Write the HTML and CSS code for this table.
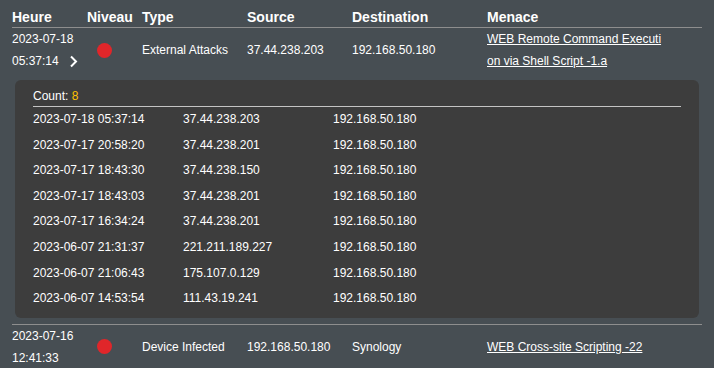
FILE: index.html
```html
<!DOCTYPE html>
<html lang="fr">
<head>
    <meta charset="UTF-8">
    <meta name="viewport" content="width=device-width, initial-scale=1.0">
    <title>Journal des menaces</title>
    <link rel="stylesheet" href="styles.css">
</head>
<body>
    <div class="log">
        <div class="log-row log-head">
            <div>Heure</div>
            <div>Niveau</div>
            <div>Type</div>
            <div>Source</div>
            <div>Destination</div>
            <div>Menace</div>
        </div>

        <div class="log-row entry">
            <div class="time">
                <div>2023-07-18</div>
                <div class="time-line">05:37:14
                    <svg class="chevron" width="9" height="13" viewBox="0 0 9 13">
                        <path d="M2 1.5 L7 6.5 L2 11.5" fill="none" stroke="#fff" stroke-width="2"/>
                    </svg>
                </div>
            </div>
            <div><span class="level high"></span></div>
            <div>External Attacks</div>
            <div>37.44.238.203</div>
            <div>192.168.50.180</div>
            <div class="threat"><a href="#">WEB Remote Command Execution via Shell Script -1.a</a></div>
        </div>

        <div class="details">
            <div class="count">Count: <span class="count-num">8</span></div>
            <div class="hits">
                <div class="hit"><span>2023-07-18 05:37:14</span><span>37.44.238.203</span><span>192.168.50.180</span></div>
                <div class="hit"><span>2023-07-17 20:58:20</span><span>37.44.238.201</span><span>192.168.50.180</span></div>
                <div class="hit"><span>2023-07-17 18:43:30</span><span>37.44.238.150</span><span>192.168.50.180</span></div>
                <div class="hit"><span>2023-07-17 18:43:03</span><span>37.44.238.201</span><span>192.168.50.180</span></div>
                <div class="hit"><span>2023-07-17 16:34:24</span><span>37.44.238.201</span><span>192.168.50.180</span></div>
                <div class="hit"><span>2023-06-07 21:31:37</span><span>221.211.189.227</span><span>192.168.50.180</span></div>
                <div class="hit"><span>2023-06-07 21:06:43</span><span>175.107.0.129</span><span>192.168.50.180</span></div>
                <div class="hit"><span>2023-06-07 14:53:54</span><span>111.43.19.241</span><span>192.168.50.180</span></div>
            </div>
        </div>

        <div class="log-row entry bordered">
            <div class="time">
                <div>2023-07-16</div>
                <div>12:41:33</div>
            </div>
            <div><span class="level high"></span></div>
            <div>Device Infected</div>
            <div>192.168.50.180</div>
            <div>Synology</div>
            <div class="threat"><a href="#">WEB Cross-site Scripting -22</a></div>
        </div>
    </div>
</body>
</html>
```

FILE: styles.css
```css
body {
    margin: 0;
    background: #474e53;
    color: #fff;
    font-family: "Liberation Sans", Arial, sans-serif;
    font-size: 12px;
    overflow: hidden;
}
.log {
    padding: 0 12px;
}
.log-row {
    display: grid;
    grid-template-columns: 75px 55px 105px 105px 135px 1fr;
    align-items: center;
}
.log-head {
    font-size: 14px;
    font-weight: bold;
    line-height: 20px;
    padding-top: 7px;
    border-bottom: 1px solid #8e8e8e;
}
.entry {
    line-height: 22px;
}
.entry.bordered {
    border-top: 1px solid #8e8e8e;
    margin-top: 6px;
    padding-top: 0;
}
.time-line {
    display: flex;
    align-items: center;
}
.chevron {
    margin-left: 10px;
}
.level {
    display: block;
    width: 15px;
    height: 15px;
    margin-left: 10px;
    border-radius: 50%;
}
.level.high {
    background: #e0262a;
}
.threat {
    width: 178px;
    word-break: break-all;
}
.threat a {
    color: #fff;
    text-decoration: underline;
}
.details {
    margin: 8px 3px 0;
    padding: 6px 18px 6px;
    background: #3d3d3d;
    border-radius: 6px;
}
.count {
    line-height: 20px;
    border-bottom: 1px solid #c4c4c4;
}
.count-num {
    color: #ffc000;
}
.hit {
    display: grid;
    grid-template-columns: 150px 150px 1fr;
    line-height: 25.6px;
}
```
